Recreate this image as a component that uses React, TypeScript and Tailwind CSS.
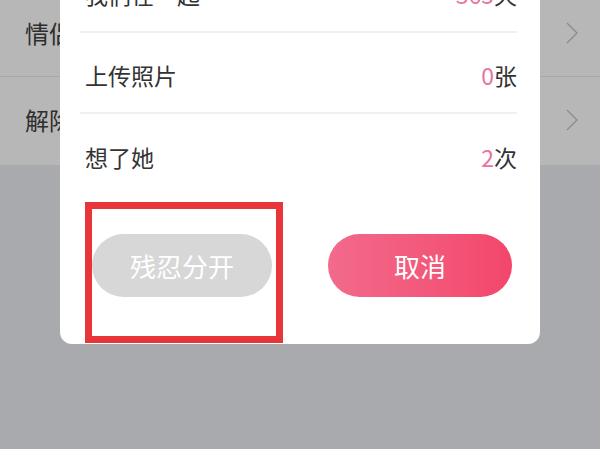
import React from "react";

const font = { fontFamily: '"Noto Sans CJK SC", "Noto Sans", sans-serif' };

function Chevron() {
  return (
    <svg width="12" height="22" viewBox="0 0 12 22" fill="none">
      <polyline points="1,1 11,11 1,21" stroke="#8c8c8c" strokeWidth="1.4" fill="none" />
    </svg>
  );
}

function Row({ label, num, unit, last }: { label: string; num: string; unit: string; last?: boolean }) {
  return (
    <div
      className={`h-[81px] flex items-center justify-between pt-[6px] ${last ? "" : "border-b-2 border-[#f0f0f0]"}`}
    >
      <span className="pl-[5px] text-[23px] text-[#333333] leading-none">{label}</span>
      <span className="text-[23px] leading-none">
        <span className="text-[#e8739b]">{num}</span>
        <span className="text-[#333333]">{unit}</span>
      </span>
    </div>
  );
}

export default function App() {
  return (
    <div className="relative w-[600px] h-[449px] overflow-hidden bg-[#a9aaad]" style={font}>
      {/* background page (dimmed) */}
      <div className="h-[165px] bg-[#b7b7b7] flex flex-col">
        <div className="h-[77px] flex items-center justify-between pl-[25px] pr-[22px] border-b border-[#a9a9a9]">
          <span className="text-[24px] text-[#2e2e2e] leading-none pb-[10px]">情侣空间</span>
          <div className="pb-[10px]">
            <Chevron />
          </div>
        </div>
        <div className="h-[88px] flex items-center justify-between pl-[25px] pr-[22px]">
          <span className="text-[24px] text-[#2e2e2e] leading-none pb-[2px]">解除关系</span>
          <div className="pb-[2px]">
            <Chevron />
          </div>
        </div>
      </div>

      {/* modal */}
      <div className="absolute left-[60px] top-[-50px] w-[480px] bg-white rounded-b-[12px] flex flex-col">
        <div className="ml-[20px] mr-[23px] flex flex-col">
          <div className="h-[2px]" />
          <Row label="我们在一起" num="365" unit="天" />
          <Row label="上传照片" num="0" unit="张" />
          <Row label="想了她" num="2" unit="次" last />
        </div>
        <div className="mt-[39px] pb-[47px] pl-[32px] pr-[28px] flex justify-between">
          <div className="w-[180px] h-[63px] rounded-full bg-[#d7d7d7] flex items-center justify-center">
            <span className="text-[26px] text-white leading-none">残忍分开</span>
          </div>
          <div className="w-[184px] h-[63px] rounded-full bg-gradient-to-r from-[#f26a8c] to-[#f3466c] flex items-center justify-center">
            <span className="text-[26px] text-white leading-none">取消</span>
          </div>
        </div>
      </div>

      {/* red annotation box */}
      <div className="absolute left-[85px] top-[202px] w-[198px] h-[141px] border-[7px] border-[#e8353a]" />
    </div>
  );
}
